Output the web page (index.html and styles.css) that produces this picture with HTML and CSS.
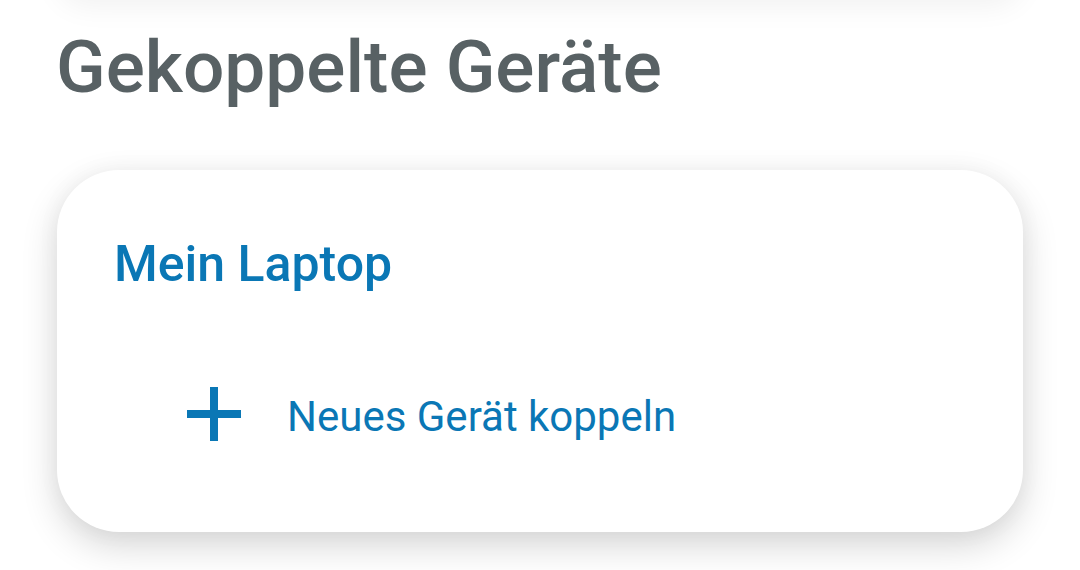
FILE: index.html
```html
<!DOCTYPE html>
<html lang="de">
<head>
<meta charset="utf-8">
<link rel="stylesheet" href="styles.css">
</head>
<body>
<div class="prev-card"></div>
<h1 class="title">Gekoppelte Geräte</h1>
<section class="card">
  <h2 class="device">Mein Laptop</h2>
  <div class="pair-row">
    <svg class="plus" width="54" height="54" viewBox="0 0 54 54" aria-hidden="true">
      <rect x="0" y="23" width="54" height="8" fill="#0a77b5"/>
      <rect x="23" y="0" width="8" height="54" fill="#0a77b5"/>
    </svg>
    <span class="pair-label">Neues Gerät koppeln</span>
  </div>
</section>
</body>
</html>
```
FILE: styles.css
```css
html, body {
  margin: 0;
  padding: 0;
  background: #ffffff;
  width: 1080px;
  height: 570px;
  overflow: hidden;
  font-family: Roboto, "Noto Sans", sans-serif;
}
.prev-card {
  height: 60px;
  margin: -60px 57px 0;
  border-radius: 60px;
  background: #fff;
  box-shadow: 0 6px 30px rgba(0,0,0,0.06);
}
.title {
  margin: 23px 0 0 56px;
  font-size: 73px;
  font-weight: 500;
  line-height: 88px;
  color: #586164;
  letter-spacing: 0;
}
.card {
  margin: 59px 57px 0;
  height: 362px;
  background: #fff;
  border-radius: 62px;
  box-shadow: 0 14px 36px rgba(0,0,0,0.16), 0 0 24px rgba(0,0,0,0.04);
  padding: 64px 0 0 57px;
  box-sizing: border-box;
}
.device {
  margin: 0;
  font-size: 50px;
  font-weight: 500;
  line-height: 60px;
  color: #0a77b5;
}
.pair-row {
  display: flex;
  align-items: center;
  margin: 90px 0 0 73px;
  gap: 46px;
}
.plus { display: block; flex: none; }
.pair-label {
  font-size: 42px;
  font-weight: 400;
  line-height: 54px;
  padding-top: 6px;
  color: #0a77b5;
}
```
